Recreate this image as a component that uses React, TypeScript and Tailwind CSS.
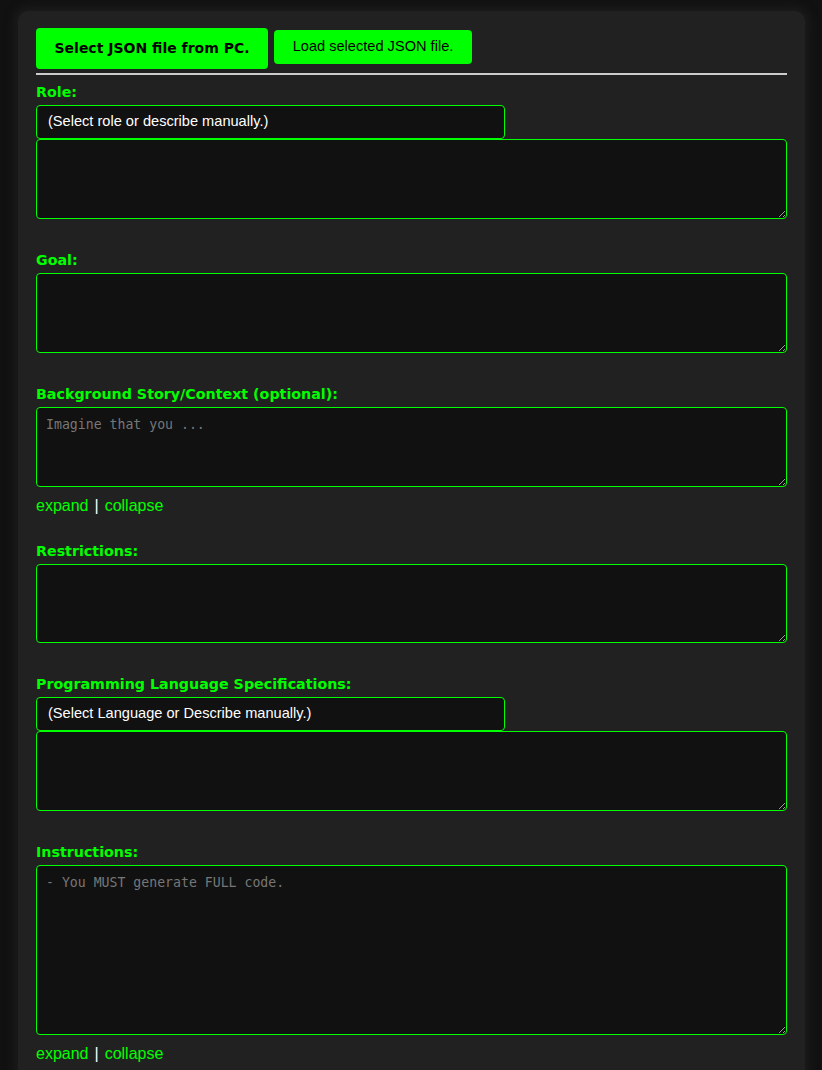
import { useState } from 'react';

const labelCls =
  "block text-[14.25px] leading-[17px] font-bold text-[#00ff00] mb-[4px] [font-family:'DejaVu_Sans',Verdana,sans-serif]";
const areaCls =
  "block w-full bg-[#111111] border border-[#00ff00] rounded-[4px] px-[9px] py-[8px] text-[13.2px] leading-[17px] text-[#dddddd] placeholder:text-[#777777] outline-none [font-family:'DejaVu_Sans_Mono',monospace]";
const selectCls =
  "block w-[469px] h-[34px] bg-[#111111] border border-[#00ff00] rounded-[4px] pl-[11px] text-[14.6px] text-white appearance-none outline-none [font-family:'Liberation_Sans',Arial,sans-serif]";

function ExpandRow() {
  return (
    <div className="mt-[10px] text-[16px] leading-[18px] [font-family:'Liberation_Sans',Arial,sans-serif]">
      <a className="text-[#00ff00] cursor-pointer">expand</a>
      <span className="text-white mx-[6px]">|</span>
      <a className="text-[#00ff00] cursor-pointer">collapse</a>
    </div>
  );
}

export default function App() {
  const [role, setRole] = useState('');
  const [lang, setLang] = useState('');

  return (
    <div className="min-h-screen bg-[#111111] pl-[18px] pr-[17px] pt-[11px]">
      <div className="bg-[#212121] rounded-[10px] shadow-[0_0_10px_4px_#1c1c1c] px-[18px] pt-[17px] pb-[40px]">
        <div className="flex items-start gap-[6px]">
          <button className="w-[232px] h-[41px] bg-[#00ff00] text-black rounded-[4px] text-[14px] font-bold [font-family:'DejaVu_Sans',Verdana,sans-serif]">
            Select JSON file from PC.
          </button>
          <button className="mt-[2px] w-[198px] h-[34px] bg-[#00ff00] text-black rounded-[4px] text-[14.6px] [font-family:'Liberation_Sans',Arial,sans-serif]">
            Load selected JSON file.
          </button>
        </div>
        <div className="mt-[4px] h-[2px] bg-[#cccccc]" />

        <label className={labelCls + ' mt-[9px]'}>Role:</label>
        <select className={selectCls} value={role} onChange={(e) => setRole(e.target.value)}>
          <option value="">(Select role or describe manually.)</option>
        </select>
        <textarea className={areaCls + ' h-[80px]'} />

        <label className={labelCls + ' mt-[33px]'}>Goal:</label>
        <textarea className={areaCls + ' h-[80px]'} />

        <label className={labelCls + ' mt-[33px]'}>Background Story/Context (optional):</label>
        <textarea className={areaCls + ' h-[80px]'} placeholder="Imagine that you ..." />
        <ExpandRow />

        <label className={labelCls + ' mt-[28px]'}>Restrictions:</label>
        <textarea className={areaCls + ' h-[79px]'} />

        <label className={labelCls + ' mt-[33px]'}>Programming Language Specifications:</label>
        <select className={selectCls} value={lang} onChange={(e) => setLang(e.target.value)}>
          <option value="">(Select Language or Describe manually.)</option>
        </select>
        <textarea className={areaCls + ' h-[80px]'} />

        <label className={labelCls + ' mt-[33px]'}>Instructions:</label>
        <textarea className={areaCls + ' h-[170px]'} placeholder="- You MUST generate FULL code." />
        <ExpandRow />
      </div>
    </div>
  );
}
